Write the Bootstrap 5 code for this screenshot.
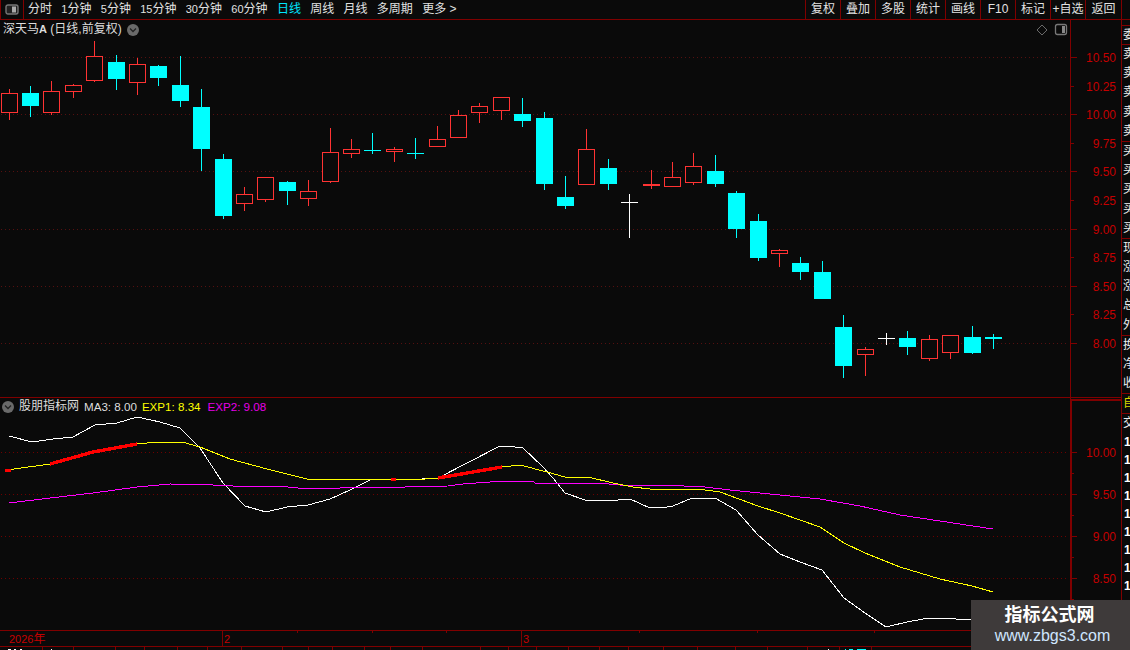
<!DOCTYPE html>
<html lang="zh">
<head>
<meta charset="utf-8">
<title>深天马A</title>
<link href="https://cdn.jsdelivr.net/npm/bootstrap@5.3.0/dist/css/bootstrap.min.css" rel="stylesheet">
<style>
html,body{height:100%;overflow:hidden;background:#0a0a0a}
body{font-family:"Liberation Sans","Noto Sans CJK SC",sans-serif;font-size:12px;color:#ddd}
.app-frame{width:1130px;height:650px;position:relative;overflow:hidden;background:#0a0a0a}
.tool-bar{height:20px;border-bottom:1px solid #800000;padding-right:8px}
.tb{--bs-btn-padding-x:0;--bs-btn-padding-y:0;--bs-btn-font-size:12px;--bs-btn-font-family:inherit;--bs-btn-line-height:19px;--bs-btn-color:#e2e2e2;--bs-btn-hover-color:#fff;--bs-btn-border-width:0;--bs-btn-border-radius:0;white-space:nowrap}
.tb-on{--bs-btn-color:#00e6ff;--bs-btn-hover-color:#00e6ff}
.tb-dig{font-size:11px}
.tb-icon{width:24px;height:19px;border-right:1px solid #800000;border-left:1px solid #800000}
.tb-left{gap:9.3px;padding-left:4px}
.tb-cell{width:35px;border-left:1px solid #800000;text-align:center}
.tb-last{width:37px;border-right:1px solid #800000}
.work-area{height:630px}
.chart-col{width:1121px}
.chart-col svg{display:block}
.panel-box{position:relative}
.legend-row{position:absolute;left:3px;top:2px;line-height:15px;white-space:nowrap;gap:5px}
.legend-low{left:2px;top:1px;gap:5px}
.leg-main{color:#ddd}
.leg-num{font-size:11.6px}
.leg-yellow{color:#ffff00}
.leg-pink{color:#e600e6;margin-left:2px}
.leg-bold{font-weight:700;font-size:11px}
.side-strip{width:9px;border-left:1px solid #800000;overflow:hidden;line-height:19px;white-space:nowrap;padding-top:5px}
.side-row{height:19.4px;padding-left:1px;color:#eee}
.side-line{border-top:1px solid #800000}
.side-gold{color:#d8d800;height:20px;border-top:1px solid #800000}
.side-num{height:18px;padding-left:2px;font-weight:700;color:#fff;line-height:18px}
.stamp-box{position:absolute;right:0;bottom:0;width:159px;height:50px;background:#3e3a3a;text-align:center}
.stamp-title{font-size:18px;font-weight:700;color:#fff;line-height:22px;padding-top:4px;padding-right:2px}
.stamp-url{font-size:16px;line-height:20px;color:#cfe6ff;padding-left:4px}
</style>
</head>
<body>
<div class="app-frame d-flex flex-column">
  <div class="tool-bar d-flex align-items-stretch flex-shrink-0">
    <div class="tb-icon d-flex align-items-center justify-content-center">
      <svg width="14" height="11" viewBox="0 0 14 11"><rect x="1" y="1" width="12" height="9" rx="2" fill="#222" stroke="#777" stroke-width="1.4"/><rect x="7" y="2.5" width="4" height="6" fill="#aaa"/></svg>
    </div>
    <div class="tb-left d-flex">
      <button class="btn tb">分时</button><button class="btn tb"><span class="tb-dig">1</span>分钟</button><button class="btn tb"><span class="tb-dig">5</span>分钟</button><button class="btn tb"><span class="tb-dig">15</span>分钟</button><button class="btn tb"><span class="tb-dig">30</span>分钟</button><button class="btn tb"><span class="tb-dig">60</span>分钟</button><button class="btn tb tb-on">日线</button><button class="btn tb">周线</button><button class="btn tb">月线</button><button class="btn tb">多周期</button><button class="btn tb">更多 &gt;</button>
    </div>
    <div class="d-flex ms-auto">
      <button class="btn tb tb-cell">复权</button><button class="btn tb tb-cell">叠加</button><button class="btn tb tb-cell">多股</button><button class="btn tb tb-cell">统计</button><button class="btn tb tb-cell">画线</button><button class="btn tb tb-cell">F10</button><button class="btn tb tb-cell">标记</button><button class="btn tb tb-cell">+自选</button><button class="btn tb tb-cell tb-last">返回</button>
    </div>
  </div>
  <div class="work-area d-flex">
    <div class="chart-col flex-shrink-0">
      <div class="panel-box">
        <svg id="priceChart" width="1121" height="378" viewBox="0 20 1121 378"></svg>
        <div class="legend-row d-flex align-items-center">
          <span class="leg-main">深天马<span class="leg-bold">A</span> (日线,前复权)</span>
          <svg width="12" height="12" viewBox="0 0 12 12"><circle cx="6" cy="6" r="6" fill="#6a6a6a"/><path d="M3 4.5 6 7.5 9 4.5" fill="none" stroke="#222" stroke-width="1.3"/></svg>
        </div>
      </div>
      <div class="panel-box">
        <svg id="indicatorChart" width="1121" height="232" viewBox="0 398 1121 232"></svg>
        <div class="legend-row legend-low d-flex align-items-center">
          <svg width="12" height="12" viewBox="0 0 12 12"><circle cx="6" cy="6" r="6" fill="#6a6a6a"/><path d="M3 4.5 6 7.5 9 4.5" fill="none" stroke="#222" stroke-width="1.3"/></svg>
          <span class="leg-main">股朋指标网</span>
          <span class="leg-main leg-num">MA3: 8.00</span>
          <span class="leg-yellow leg-num">EXP1: 8.34</span>
          <span class="leg-pink leg-num">EXP2: 9.08</span>
        </div>
      </div>
      <svg id="timeAxis" width="1121" height="16" viewBox="0 630 1121 16"></svg>
      <svg id="statusStrip" width="1121" height="4" viewBox="0 646 1121 4"></svg>
    </div>
    <div class="side-strip flex-shrink-0">
      <div class="side-row side-line">委比</div>
      <div class="side-row side-line">卖五</div><div class="side-row">卖四</div><div class="side-row">卖三</div><div class="side-row">卖二</div><div class="side-row">卖一</div>
      <div class="side-row side-line">买一</div><div class="side-row">买二</div><div class="side-row">买三</div><div class="side-row">买四</div><div class="side-row">买五</div>
      <div class="side-row side-line">现价</div><div class="side-row">涨跌</div><div class="side-row">涨幅</div><div class="side-row">总量</div><div class="side-row">外盘</div>
      <div class="side-row side-line">换手</div><div class="side-row">净资</div><div class="side-row">收益</div>
      <div class="side-row side-gold">自</div>
      <div class="side-row side-line">交</div>
      <div class="side-num">1</div><div class="side-num">1</div><div class="side-num">1</div><div class="side-num">1</div><div class="side-num">1</div><div class="side-num">1</div><div class="side-num">1</div><div class="side-num">1</div><div class="side-num">1</div>
    </div>
  </div>
  <div class="stamp-box">
    <div class="stamp-title">指标公式网</div>
    <div class="stamp-url">www.zbgs3.com</div>
  </div>
</div>
<script src="https://cdn.jsdelivr.net/npm/bootstrap@5.3.0/dist/js/bootstrap.bundle.min.js"></script>
<script>
var R='#ff3333',C='#00ffff',W='#ffffff',LINE='#800000',BG='#0a0a0a',AX='#c40000';
// colour, centre x, wick top, wick bottom, body top, body bottom
var candles=[
[R,9,89,120,93,113],[C,30,86,117,93,106],[R,51,81,115,91,113],[R,73,84,98,85,92],[R,94,41,82,56,81],
[C,116,55,90,62,79],[R,137,58,95,64,83],[C,158,65,86,66,78],[C,180,56,107,85,101],[C,201,89,171,107,149],
[C,223,154,219,159,216],[R,244,187,211,194,204],[R,265,177,202,177,200],[C,287,181,205,182,191],[R,308,180,206,191,199],
[R,330,128,183,152,182],[R,351,139,158,149,154],[C,372,133,154,150,151],[R,394,147,162,149,152],[C,415,138,159,153,154],
[R,437,126,147,139,147],[R,458,110,138,115,138],[R,479,103,123,106,113],[R,501,97,120,97,111],[C,522,98,127,114,121],
[C,544,112,190,118,184],[C,565,176,209,197,206],[R,586,129,185,149,185],[C,608,159,190,168,184],[W,629,194,238,202,203],
[R,651,170,189,184,186],[R,672,162,186,177,187],[R,693,153,185,166,183],[C,715,155,187,171,184],[C,736,191,238,193,229],
[C,758,214,261,221,258],[R,779,249,267,250,254],[C,800,257,280,263,272],[C,822,261,299,272,299],[C,843,315,378,327,366],
[R,865,347,376,349,355],[W,886,333,345,338,339],[C,907,331,355,338,347],[R,929,335,361,339,359],[R,950,335,359,335,353],
[C,972,326,354,337,353],[C,993,334,349,337,339]];
function rect(x,y,w,h,f){return '<rect x="'+x+'" y="'+y+'" width="'+w+'" height="'+h+'" fill="'+f+'"/>';}
function dots(y,c){return '<line x1="1" y1="'+(y+.5)+'" x2="1066" y2="'+(y+.5)+'" stroke="'+c+'" stroke-dasharray="1 3"/>';}
function label(y,t){return '<text x="1116" y="'+(y+4.5)+'" text-anchor="end" fill="'+AX+'" font-size="12">'+t+'</text>';}
function poly(p,c,w){return '<polyline points="'+p+'" fill="none" stroke="'+c+'" stroke-width="'+(w||1)+'"/>';}

var s='<g shape-rendering="crispEdges">';
[57,114,171,229,286,343].forEach(function(y){s+=dots(y,'#561010');s+=rect(1071,y,6,1,LINE);});
[86,143,200,257,314].forEach(function(y){s+=rect(1071,y,3,1,LINE);});
candles.forEach(function(k){
  var c=k[0],x=k[1];
  s+=rect(x,k[2],1,k[3]-k[2],c);
  var h=k[5]-k[4];
  if(c===R&&h>2){s+='<rect x="'+(x-8+.5)+'" y="'+(k[4]+.5)+'" width="16" height="'+(h-1)+'" fill="'+BG+'" stroke="'+c+'"/>';}
  else{s+=rect(x-8,k[4],17,h,c);}
});
s+=rect(1070,20,1,378,LINE)+rect(0,397,1121,1,LINE);
s+='</g>';
s+='<path d="M1042 25 1047 30 1042 35 1037 30Z" fill="none" stroke="#6a6a6a"/>';
s+='<rect x="1055.5" y="24.5" width="11" height="10" rx="2" fill="none" stroke="#777" stroke-width="1.3"/><rect x="1062" y="26" width="3" height="7" fill="#888"/>';
[[57,'10.50'],[86,'10.25'],[114,'10.00'],[143,'9.75'],[171,'9.50'],[200,'9.25'],[229,'9.00'],[257,'8.75'],[286,'8.50'],[314,'8.25'],[343,'8.00']].forEach(function(a){s+=label(a[0],a[1]);});
document.getElementById('priceChart').innerHTML=s;

var white='9,436 32,442 53,439 73,437 95,425 117,423 137,417 160,422 180,428 200,448 223,483 245,506 266,512 287,507 308,505 330,499 350,490 372,479 405,479 422,479 438,478 500,446 507,446 523,448 543,467 553,478 565,493 585,500 618,500 630,499 650,508 667,507 673,506 692,498 715,498 736,510 758,535 780,554 800,562 822,570 844,598 865,613 886,627 907,622 923,619 940,618 972,620';
var yellow='7,470 50,464 93,452 137,444 157,442 182,442 200,447 230,459 267,469 307,479 425,479 438,478 502,467 520,465 547,472 565,477 588,477 613,483 633,487 650,489 698,489 720,492 758,506 780,513 820,527 844,543 865,553 900,567 940,579 972,586 993,592';
var pink='9,503 50,498 93,493 137,487 170,484 213,485 233,486 277,486 298,488 340,488 343,487 405,487 448,486 463,484 490,482 513,481 533,481 535,483 598,483 620,485 662,485 705,487 730,490 780,495 820,499 860,506 900,515 993,529';
var t='<g shape-rendering="crispEdges">';
t+=rect(1071,399,1,231,LINE)+rect(1071,399,50,2,LINE);
[452,494,536,578].forEach(function(y){t+=dots(y,'#6e0000');t+=rect(1071,y,6,1,LINE);});
[473,515,557,599].forEach(function(y){t+=rect(1071,y,3,1,LINE);});
t+=rect(1070,398,1,232,LINE);
t+=poly(white,W)+poly(pink,'#ff00ff')+poly(yellow,'#ffff00');
t+=poly('50,464 93,452 137,444','#ff0000',3.4)+poly('438,478 502,467','#ff0000',3.4);
t+=rect(5,469,6,3,'#ff0000')+rect(391,478,5,3,'#ff0000');
t+='</g>';
[[452,'10.00'],[494,'9.50'],[536,'9.00'],[578,'8.50']].forEach(function(a){t+=label(a[0],a[1]);});
document.getElementById('indicatorChart').innerHTML=t;

var a='<g shape-rendering="crispEdges">'+rect(0,630,1121,1,LINE);
[222,521].forEach(function(x){a+=rect(x,630,1,16,LINE);});
[297,372,446,639,757,874].forEach(function(x){a+=rect(x,631,1,2,LINE);});
a+='</g>';
a+='<text x="9" y="643" fill="'+AX+'" font-size="11">2026<tspan font-size="12">年</tspan></text>';
a+='<text x="224" y="643" fill="'+AX+'" font-size="11">2</text><text x="523" y="643" fill="'+AX+'" font-size="11">3</text>';
document.getElementById('timeAxis').innerHTML=a;

var b='<g shape-rendering="crispEdges">'+rect(0,646,1121,1,LINE);
[42,73,115,144,177,207,241,282,308,332,364,390,422,480,508,536,568,599,628,663,697,735,767,807,839,871].forEach(function(x){b+=rect(x,647,1,3,LINE);});
[[8,3],[14,2],[20,2],[51,1],[828,1]].forEach(function(p){b+=rect(p[0],649,p[1],1,W);});
[[845,1],[849,4],[857,9]].forEach(function(p){b+=rect(p[0],649,p[1],1,C);});
b+='</g>';
document.getElementById('statusStrip').innerHTML=b;
</script>
</body>
</html>
